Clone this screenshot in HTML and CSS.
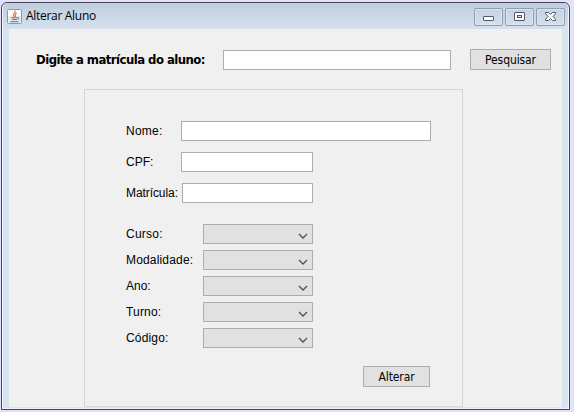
FILE: index.html
```html
<!DOCTYPE html>
<html lang="pt-BR">
<head>
<meta charset="utf-8">
<title>Alterar Aluno</title>
<link rel="stylesheet" href="styles.css">
</head>
<body>
<main class="window">
  <header class="titlebar">
    <svg class="logo" width="16" height="16" viewBox="0 0 16 16">
      <rect x=".5" y=".5" width="14" height="14" rx="1" fill="#e3ebf3" stroke="#8999aa"/>
      <path d="M1 1h13v6H1z" fill="#f8fafb"/>
      <path d="M8.3 1.8C9 4 5.8 4.4 6.5 6.2L7.6 8M9.8 4C7.5 5 8.9 6.1 8 7.7" fill="none" stroke="#e77a2c" stroke-width="1.2"/>
      <path d="M4 8.7h7M5 10.5h5M3.3 12.7h8.2M10.5 8.8c2.2-.4 1.8 1.5.2 1.9" fill="none" stroke="#527d9f"/>
    </svg>
    <span class="title">Alterar Aluno</span>
    <div class="controls">
      <button class="control" aria-label="Minimizar"><svg width="27" height="16" viewBox="0 0 27 16"><rect x="8.5" y="7.5" width="10" height="4" rx=".5" fill="#fff" stroke="#50576a"/></svg></button>
      <button class="control" aria-label="Maximizar"><svg width="27" height="16" viewBox="0 0 27 16"><rect x="8.5" y="3.5" width="10" height="8" rx=".5" fill="#fff" stroke="#50576a"/><rect x="11.5" y="6.5" width="4" height="2" fill="#d7e1ec" stroke="#50576a"/></svg></button>
      <button class="control" aria-label="Fechar"><svg width="27" height="16" viewBox="0 0 27 16"><path d="M8.5 3.5h3l2 2 2-2h3v1.3L16 7.5l2.5 2.7v1.3h-3l-2-2-2 2h-3v-1.3L11 7.5 8.5 4.8z" fill="#fff" stroke="#50576a" stroke-linejoin="round"/></svg></button>
    </div>
  </header>
  <div class="content">
    <div class="search">
      <label class="search-label" for="busca">Digite a matrícula do aluno:</label>
      <input class="field search-field" id="busca">
      <button class="button search-button">Pesquisar</button>
    </div>
    <section class="panel">
      <div class="row text-row"><label class="nome" for="nome">Nome:</label><input class="field wide" id="nome"></div>
      <div class="row text-row"><label class="cpf" for="cpf">CPF:</label><input class="field" id="cpf"></div>
      <div class="row text-row last"><label class="matricula" for="matricula">Matrícula:</label><input class="field matricula-field" id="matricula"></div>
      <div class="row"><span class="label curso">Curso:</span><div class="select"><svg width="10" height="6" viewBox="0 0 10 6"><path d="M1 1l4 4 4-4"/></svg></div></div>
      <div class="row"><span class="label modalidade">Modalidade:</span><div class="select"><svg width="10" height="6" viewBox="0 0 10 6"><path d="M1 1l4 4 4-4"/></svg></div></div>
      <div class="row"><span class="label">Ano:</span><div class="select"><svg width="10" height="6" viewBox="0 0 10 6"><path d="M1 1l4 4 4-4"/></svg></div></div>
      <div class="row"><span class="label turno">Turno:</span><div class="select"><svg width="10" height="6" viewBox="0 0 10 6"><path d="M1 1l4 4 4-4"/></svg></div></div>
      <div class="row"><span class="label codigo">Código:</span><div class="select"><svg width="10" height="6" viewBox="0 0 10 6"><path d="M1 1l4 4 4-4"/></svg></div></div>
      <button class="button alter-button">Alterar</button>
    </section>
  </div>
</main>
</body>
</html>
```
FILE: styles.css
```css
* { box-sizing: border-box; }
body { margin: 0; height: 412px; padding: 2px 4px 2px 1px; overflow: hidden; background: #e2e2ff; color: #000; font: 12px "Liberation Sans", Arial, sans-serif; }
.window { width: 569px; height: 408px; border: 1px solid #44474e; border-radius: 6px 6px 0 0; padding: 0 7px 2px; background: #d8e4f0; box-shadow: inset 1px 1px #f1f6fb, inset -1px -1px #eef5f7; }
.titlebar { height: 26px; margin: 0 -6px; padding: 6px 3px 0 5px; display: flex; background: linear-gradient(#bfcddd, #d5e1ee); border-radius: 5px 5px 0 0; }
.logo { flex: none; margin-left: -1px; }
.title { margin-left: 3px; margin-top: -1px; font: 12px/16px "Open Sans", "Noto Sans", sans-serif; letter-spacing: -.3px; }
.controls { display: flex; gap: 2px; margin-left: auto; margin-top: -1px; }
.control { width: 29px; height: 18px; border: 1px solid #8c9eb6; border-radius: 2px; padding: 0; background: linear-gradient(#c5d2e0, #d5e0eb); box-shadow: inset 0 0 0 1px #dbe5ef; }
.control svg { display: block; }
.content { width: 553px; height: 378px; background: #f0f0f0; }
.search { display: flex; height: 60px; padding: 20px 0 0 27px; }
.search-label { width: 187px; font: bold 13px/21px "DejaVu Sans Condensed", "DejaVu Sans", sans-serif; font-stretch: condensed; letter-spacing: -.54px; white-space: nowrap; }
.field { display: block; width: 132px; height: 20px; border: 1px solid #abadb3; border-radius: 0; padding: 0 4px; background: #fff; outline: 0; }
.search-field { width: 228px; margin-top: 1px; }
.button { display: block; border: 1px solid #adadad; border-radius: 0; padding: 0; background: #e1e1e1; color: #000; font: 12px/18px "DejaVu Sans Condensed", "DejaVu Sans", sans-serif; font-stretch: condensed; letter-spacing: -.1px; }
.search-button { width: 81px; height: 21px; margin-left: 19px; }
.panel { width: 379px; height: 318px; margin-left: 75px; padding: 31px 0 0 41px; border: 1px solid #d7d7d7; }
.row { display: flex; align-items: center; height: 20px; margin-bottom: 6px; white-space: nowrap; }
.row label { width: 55px; line-height: 18px; }
.text-row { margin-bottom: 11px; }
.text-row.last { margin-bottom: 21px; }
.row .matricula { width: 56px; letter-spacing: -.08px; }
.row .wide { width: 250px; }
.row .matricula-field { width: 131px; }
.label { width: 77px; line-height: 18px; }
.modalidade { letter-spacing: .17px; }
.nome, .curso { letter-spacing: .25px; }
.turno, .codigo { letter-spacing: .17px; }
.select { display: flex; align-items: center; justify-content: flex-end; width: 110px; height: 20px; padding: 3px 4px 0 0; border: 1px solid #adadb0; background: #e1e1e1; }
.select svg { fill: none; stroke: #505050; stroke-width: 1.3; }
.alter-button { width: 67px; height: 21px; margin: 18px 0 0 237px; }
```
